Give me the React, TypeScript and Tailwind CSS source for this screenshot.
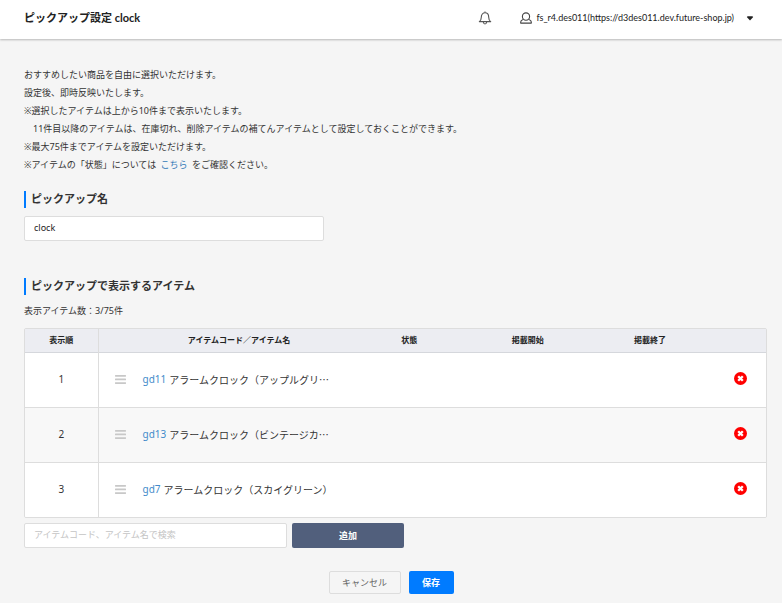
import * as React from 'react';
import { useState } from 'react';

interface PickupItem {
  code: string;
  name: string;
}

const initialItems: PickupItem[] = [
  { code: 'gd11', name: 'アラームクロック（アップルグリ…' },
  { code: 'gd13', name: 'アラームクロック（ビンテージカ…' },
  { code: 'gd7', name: 'アラームクロック（スカイグリーン）' },
];

const MAX_ITEMS = 75;

function BellIcon() {
  return (
    <svg viewBox="0 0 14 14" className="w-[14px] h-[14px]" fill="none" stroke="#555" strokeWidth="1.1">
      <path d="M7 .6v1.200M1.300 10.600c1.500-1 2-2.200 2-4.300C3.300 3.500 4.900 1.800 7 1.800s3.700 1.700 3.700 4.500c0 2.100.5 3.300 2 4.300z" strokeLinejoin="round" />
      <path d="M5.300 11c.2 1.400.9 2 1.700 2s1.500-.6 1.700-2" />
    </svg>
  );
}

function UserIcon() {
  return (
    <svg viewBox="0 0 12 12" className="w-3 h-3" fill="none" stroke="#444" strokeWidth="1.1">
      <ellipse cx="6" cy="4.600" rx="3.600" ry="3.700" />
      <path d="M3.200 7.400C1.500 8 .7 8.800.7 9.900v1.200h10.600V9.900c0-1.100-.8-1.900-2.500-2.500" strokeLinejoin="round" />
    </svg>
  );
}

function RemoveIcon() {
  return (
    <svg viewBox="0 0 13 13" className="w-[13px] h-[13px]">
      <circle cx="6.500" cy="6.500" r="6.500" fill="#ff0000" />
      <path d="M4.200 4.200l4.600 4.600M8.800 4.200L4.200 8.800" stroke="#fff" strokeWidth="2.300" />
    </svg>
  );
}

function HandleIcon() {
  return (
    <svg viewBox="0 0 11 9" className="w-[11px] h-[9px] shrink-0" fill="#c8c8c8">
      <rect width="11" height="1.700" rx=".4" />
      <rect y="3.600" width="11" height="1.700" rx=".4" />
      <rect y="7.200" width="11" height="1.700" rx=".4" />
    </svg>
  );
}

function SectionTitle({ children }: { children: React.ReactNode }) {
  return (
    <h2 className="border-l-2 border-[#007bff] pl-[5px] h-[17px] leading-4 text-[11px] font-bold text-[#333]">
      {children}
    </h2>
  );
}

export default function App() {
  const [items, setItems] = useState(initialItems);
  const [name, setName] = useState('clock');
  const [keyword, setKeyword] = useState('');

  const removeItem = (code: string) => {
    setItems(items.filter((item) => item.code !== code));
  };

  return (
    <div
      lang="ja"
      className="min-h-screen bg-[#f5f5f5] text-[#333] text-[9px] font-['Noto_Sans','Noto_Sans_CJK_JP',sans-serif]"
    >
      <header className="flex items-center justify-between h-[39px] pl-6 pr-7 pb-[3px] bg-white shadow-[0_1px_2px_rgba(0,0,0,0.25)] font-['Lato','Noto_Sans_CJK_JP',sans-serif]">
        <h1 className="text-[11px] leading-4 font-bold text-[#222]">ピックアップ設定 clock</h1>
        <div className="flex items-center">
          <button type="button" aria-label="お知らせ" className="mr-7">
            <BellIcon />
          </button>
          <button type="button" className="flex items-center text-[9px] leading-4 text-[#222]">
            <UserIcon />
            <span className="ml-1">fs_r4.des011(https://d3des011.dev.future-shop.jp)</span>
            <svg viewBox="0 0 8 5" className="w-2 h-[5px] ml-3" fill="#222">
              <path d="M.8 1l.8-.8h4.800l.8.8L4 4.400z" />
            </svg>
          </button>
        </div>
      </header>

      <main className="pl-6 pr-[15px] pt-[27px]">
        <p className="leading-[18px]">
          おすすめしたい商品を自由に選択いただけます。<br />
          設定後、即時反映いたします。<br />
          ※選択したアイテムは上から10件まで表示いたします。<br />
          {'\u3000'}11件目以降のアイテムは、在庫切れ、削除アイテムの補てんアイテムとして設定しておくことができます。<br />
          ※最大75件までアイテムを設定いただけます。<br />
          ※アイテムの「状態」については <a href="#status" className="mx-0.5 text-[#337ab7]">こちら</a> をご確認ください。
        </p>

        <section className="mt-[17px]">
          <SectionTitle>
            <label htmlFor="pickup-name">ピックアップ名</label>
          </SectionTitle>
          <input
            id="pickup-name"
            type="text"
            value={name}
            onChange={(e) => setName(e.target.value)}
            className="block mt-2 w-[300px] h-[25px] px-[9px] pb-[2px] bg-white border border-[#ddd] rounded-xs text-[#222]"
          />
        </section>

        <section className="mt-[37px]">
          <SectionTitle>ピックアップで表示するアイテム</SectionTitle>
          <p className="mt-[7px] mb-2 leading-[18px]">
            表示アイテム数：{items.length}/{MAX_ITEMS}件
          </p>

          <div className="border border-[#ddd] rounded-xs overflow-hidden">
            <table className="w-full table-fixed border-collapse">
              <thead className="bg-[#ecedf2] text-[8px] text-[#222]">
                <tr className="h-[23px] border-b border-[#d5d7dc]">
                  <th className="w-[73px] border-r border-[#ddd]">表示順</th>
                  <th className="w-[38%]">アイテムコード／アイテム名</th>
                  <th className="w-[8%]">状態</th>
                  <th className="w-[24%]">掲載開始</th>
                  <th className="w-[9%]">掲載終了</th>
                  <th aria-label="削除" />
                </tr>
              </thead>
              <tbody className="text-[10px]">
                {items.map((item, index) => (
                  <tr
                    key={item.code}
                    className="h-[55px] bg-white even:bg-[#f8f8f8] border-b border-[#ddd] last:border-b-0"
                  >
                    <td className="text-center border-r border-[#ddd]">{index + 1}</td>
                    <td>
                      <div className="flex items-center pl-4 whitespace-nowrap">
                        <HandleIcon />
                        <a href={`#${item.code}`} className="ml-[17px] text-[#428bca]">{item.code}</a>
                        <span className="ml-[3px] font-['Noto_Sans_CJK_JP',sans-serif]">{item.name}</span>
                      </div>
                    </td>
                    <td />
                    <td />
                    <td />
                    <td>
                      <div className="flex justify-end pr-[19px] pb-[2px]">
                        <button type="button" aria-label="削除" onClick={() => removeItem(item.code)}>
                          <RemoveIcon />
                        </button>
                      </div>
                    </td>
                  </tr>
                ))}
              </tbody>
            </table>
          </div>

          <div className="flex gap-[5px] mt-[5px]">
            <input
              type="text"
              aria-label="アイテム検索"
              value={keyword}
              onChange={(e) => setKeyword(e.target.value)}
              placeholder="アイテムコード、アイテム名で検索"
              className="w-[263px] h-[25px] px-[9px] pb-[2px] bg-white border border-[#ddd] rounded-xs placeholder:text-[#c4c4c4]"
            />
            <button type="button" className="w-28 h-[25px] bg-[#515f7c] rounded-xs text-white font-bold">
              追加
            </button>
          </div>
        </section>
      </main>

      <div className="flex justify-center gap-2 mt-[23px] pb-[9px]">
        <button type="button" className="w-[72px] h-[23px] border border-[#ddd] rounded-xs text-[#666]">
          キャンセル
        </button>
        <button type="button" className="w-[45px] h-[23px] bg-[#007bff] rounded-xs text-white font-bold">
          保存
        </button>
      </div>
    </div>
  );
}
